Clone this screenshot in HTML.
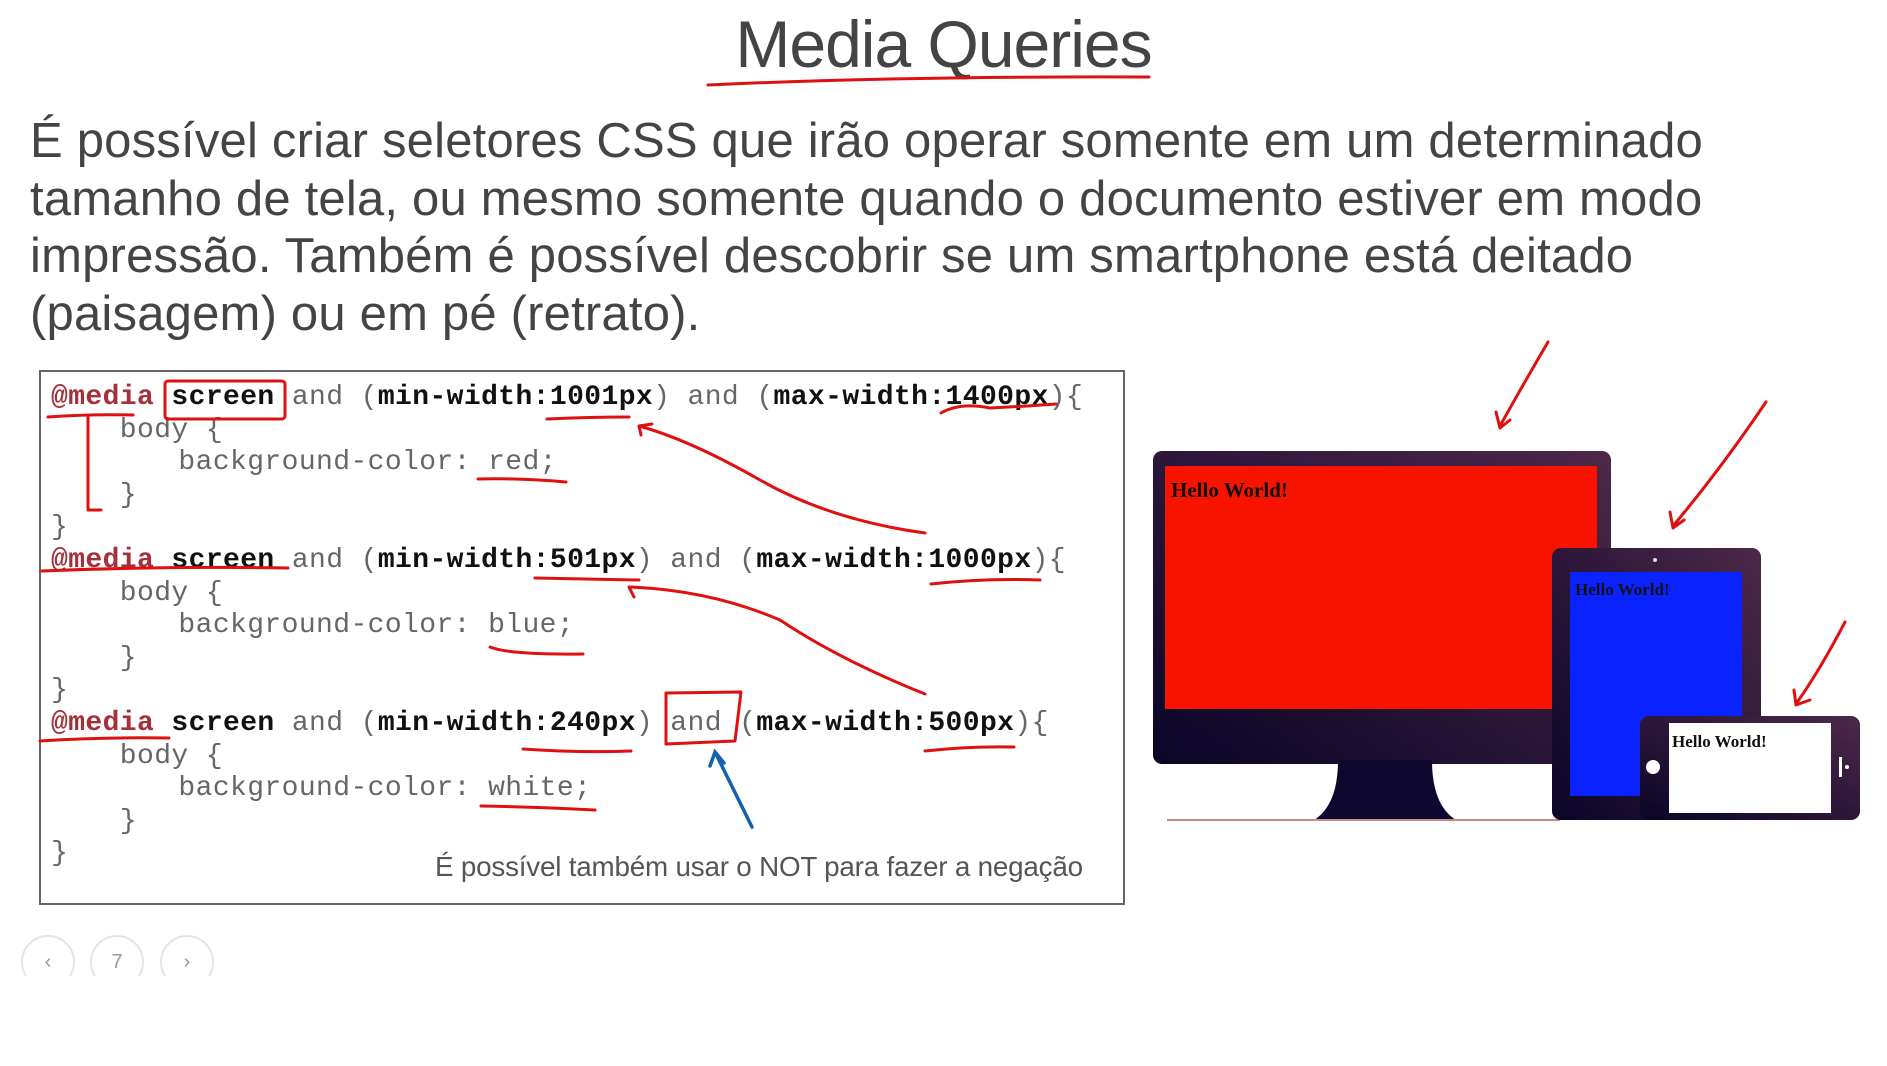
<!DOCTYPE html>
<html><head><meta charset="utf-8"><style>
*{margin:0;padding:0;box-sizing:border-box}
body{width:1887px;height:1062px;background:#fff;position:relative;overflow:hidden;font-family:"Liberation Sans",sans-serif}
.t{position:absolute;left:0;width:1887px;text-align:center;top:6px;font-size:66px;color:#444;letter-spacing:-1px}
.p{position:absolute;left:30px;font-size:49px;color:#444;white-space:nowrap;line-height:58px;letter-spacing:.2px}
.box{position:absolute;left:39px;top:370px;width:1086px;height:535px;border:2px solid #666;background:#fff}
.code{position:absolute;left:51px;top:382px;font-family:"Liberation Mono",monospace;font-size:28px;line-height:32.6px;color:#666;white-space:pre;letter-spacing:.4px}
.code b{color:#111}
.code i{font-style:normal;font-weight:bold;color:#a3303a}
.code u{text-decoration:none;margin-left:7px}
.note{position:absolute;left:435px;top:851px;font-size:27.8px;color:#555;white-space:nowrap;letter-spacing:-.2px}
.c{position:absolute;width:54px;height:54px;border:2px solid #e4e4e4;border-radius:50%;color:#999;font-size:20px;text-align:center;line-height:50px}
.hw{position:absolute;font-family:"Liberation Serif",serif;font-weight:bold;color:#111;white-space:nowrap}
</style></head><body>
<div class="t">Media Queries</div>
<div class="p" style="top:112px">É possível criar seletores CSS que irão operar somente em um determinado</div>
<div class="p" style="top:170px">tamanho de tela, ou mesmo somente quando o documento estiver em modo</div>
<div class="p" style="top:227px">impressão. Também é possível descobrir se um smartphone está deitado</div>
<div class="p" style="top:285px">(paisagem) ou em pé (retrato).</div>

<div class="box"></div>
<div class="code"><i>@media</i> <b>screen</b> and (<b>min-width:1001px</b>) and (<b>max-width:1400px</b>){
    body {
       <u>background-color: red;</u>
    }
}
<i>@media</i> <b>screen</b> and (<b>min-width:501px</b>) and (<b>max-width:1000px</b>){
    body {
       <u>background-color: blue;</u>
    }
}
<i>@media</i> <b>screen</b> and (<b>min-width:240px</b>) and (<b>max-width:500px</b>){
    body {
       <u>background-color: white;</u>
    }
}</div>
<div class="note">É possível também usar o NOT para fazer a negação</div>

<div class="c" style="left:21px;top:935px">&#8249;</div>
<div class="c" style="left:90px;top:935px">7</div>
<div class="c" style="left:160px;top:935px">&#8250;</div>
<div style="position:absolute;left:0;top:976px;width:400px;height:90px;background:#fff"></div>

<svg style="position:absolute;left:0;top:0" width="1887" height="1062">
<defs>
<linearGradient id="g" x1="0" y1="1" x2="1" y2="0"><stop offset="0" stop-color="#0a0528"/><stop offset="1" stop-color="#4d2849"/></linearGradient>
</defs>
<rect x="1153" y="451" width="458" height="313" rx="9" fill="url(#g)"/>
<path d="M1338 760 L1432 760 Q1432 805 1456 820 L1314 820 Q1338 805 1338 760Z" fill="#0e0830"/>
<line x1="1167" y1="820" x2="1560" y2="820" stroke="#c88" stroke-width="2"/>
<rect x="1165" y="466" width="432" height="243" fill="#f81200"/>
<rect x="1552" y="548" width="209" height="272" rx="9" fill="url(#g)"/>
<rect x="1570" y="572" width="172" height="224" fill="#0a22ff"/>
<circle cx="1655" cy="560" r="2" fill="#ddd"/>
<rect x="1640" y="716" width="220" height="104" rx="9" fill="url(#g)"/>
<rect x="1669" y="723" width="162" height="90" fill="#fff"/>
<circle cx="1653" cy="767" r="7" fill="#fff"/>
<rect x="1839" y="757" width="3" height="20" fill="#fff"/>
<circle cx="1847" cy="767" r="2" fill="#fff"/>
<g fill="none" stroke="#e01010" stroke-width="3" stroke-linecap="round" stroke-linejoin="round">
<path d="M708 85 Q900 76 1149 77"/>
<path d="M48 417 Q90 414 133 415"/><path d="M88 417 L88 510 L101 510"/>
<rect x="165" y="381" width="120" height="38" rx="3"/>
<path d="M547 419 Q590 417 629 417"/>
<path d="M941 413 Q960 402 990 408 Q1030 406 1056 404"/>
<path d="M478 479 Q520 478 566 482"/>
<path d="M925 533 Q830 520 760 480 Q690 440 639 426 M639 426 L652 424 M639 426 L641 435"/>
<path d="M42 571 Q160 566 288 568"/>
<path d="M535 578 Q590 579 639 580"/>
<path d="M931 584 Q985 578 1040 580"/>
<path d="M490 647 Q510 655 583 654"/>
<path d="M925 694 Q840 660 780 620 Q710 590 629 587 L634 597"/>
<path d="M40 741 Q100 737 169 738"/>
<path d="M523 749 Q580 753 631 751"/>
<path d="M666 693 L741 692 L735 741 L666 744Z"/>
<path d="M925 751 Q970 746 1014 747"/>
<path d="M481 806 Q540 807 595 810"/>
<path d="M1548 342 Q1520 390 1500 426 M1496 412 L1500 428 L1510 420"/>
<path d="M1766 402 Q1720 470 1673 526 M1670 512 L1673 528 L1684 520"/>
<path d="M1845 622 Q1820 670 1796 704 M1794 690 L1796 705 L1810 700"/>
</g>
<path d="M752 827 L716 754 M710 766 L715 752 L724 763" fill="none" stroke="#1560b0" stroke-width="3.5" stroke-linecap="round"/>
</svg>
<div class="hw" style="left:1171px;top:478px;font-size:21px">Hello World!</div>
<div class="hw" style="left:1575px;top:580px;font-size:17px">Hello World!</div>
<div class="hw" style="left:1672px;top:732px;font-size:17px">Hello World!</div>
</body></html>
